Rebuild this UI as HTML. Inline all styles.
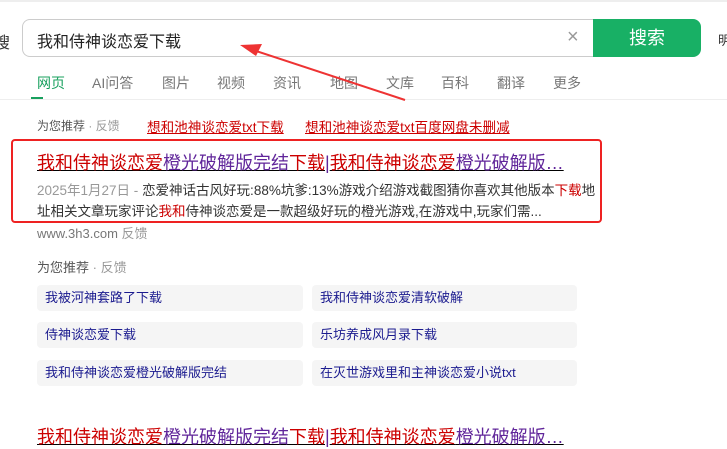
<!DOCTYPE html><html><head><meta charset="utf-8"><style>
body{margin:0;width:727px;height:447px;overflow:hidden;background:#fff;font-family:"Liberation Sans","Noto Sans CJK SC",sans-serif;position:relative}
.a{position:absolute;white-space:nowrap}
.r{color:#c00}.p{color:#60259a}
.t{font-size:18px;text-decoration:underline}
.g{position:absolute;background:#f5f5f5;border-radius:4px;height:26px;line-height:26px;font-size:13px;color:#1b1b8f;padding-left:8px;box-sizing:border-box}
.tb{position:absolute;top:73px;font-size:14px;color:#777}
</style></head><body>
<div class="a" style="top:0;left:0;width:727px;height:2px;background:#eee"></div>
<div class="a" style="left:-6px;top:29px;font-size:16px;color:#333">搜</div>
<div class="a" style="left:22px;top:19px;width:576px;height:36px;border:1px solid #ccc;border-right:none;border-radius:8px 0 0 8px"></div>
<div class="a" style="left:37px;top:28px;font-size:16px;color:#222">我和侍神谈恋爱下载</div>
<div class="a" style="left:567px;top:26px;font-size:20px;color:#999">×</div>
<div class="a" style="left:593px;top:19px;width:108px;height:38px;background:#18b065;border-radius:0 8px 8px 0;color:#fff;font-size:18px;line-height:38px;text-align:center">搜索</div>
<div class="a" style="left:718px;top:30px;font-size:13px;color:#333">明</div>
<div class="tb" style="left:37px;color:#18a05e">网页</div>
<div class="tb" style="left:92px">AI问答</div>
<div class="tb" style="left:162px">图片</div>
<div class="tb" style="left:217px">视频</div>
<div class="tb" style="left:273px">资讯</div>
<div class="tb" style="left:330px">地图</div>
<div class="tb" style="left:386px">文库</div>
<div class="tb" style="left:441px">百科</div>
<div class="tb" style="left:497px">翻译</div>
<div class="tb" style="left:553px">更多</div>
<div class="a" style="left:31px;top:97px;width:12px;height:3px;background:#18a05e"></div>
<div class="a" style="left:0;top:99px;width:727px;height:1px;background:#eee"></div>
<svg class="a" style="left:0;top:0" width="727" height="447"><line x1="250" y1="49" x2="405" y2="100" stroke="#e33" stroke-width="2"/><polygon points="240,45 262,44 256,56" fill="#e33"/></svg>
<div class="a" style="left:37px;top:117px;font-size:12px;color:#555">为您推荐 <span style="color:#999">· 反馈</span></div>
<div class="a r" style="left:147px;top:116px;font-size:13.6px;text-decoration:underline">想和池神谈恋爱txt下载</div>
<div class="a r" style="left:305px;top:116px;font-size:13.6px;text-decoration:underline">想和池神谈恋爱txt百度网盘未删减</div>
<div class="a" style="left:11px;top:139px;width:587px;height:80px;border:2px solid #e22;border-radius:4px"></div>
<div class="a t" style="left:37px;top:149px"><span class="r">我和侍神谈恋爱</span><span class="p">橙光破解版完结</span><span class="r">下载</span><span class="p">|</span><span class="r">我和侍神谈恋爱</span><span class="p">橙光破解版…</span></div>
<div class="a" style="left:37px;top:179px;font-size:13.5px;color:#333"><span style="color:#999">2025年1月27日 - </span>恋爱神话古风好玩:88%坑爹:13%游戏介绍游戏截图猜你喜欢其他版本<span class="r">下载</span>地</div>
<div class="a" style="left:37px;top:200px;font-size:13.5px;color:#333">址相关文章玩家评论<span class="r">我和</span>侍神谈恋爱是一款超级好玩的橙光游戏,在游戏中,玩家们需...</div>
<div class="a" style="left:37px;top:223px;font-size:13px;color:#777">www.3h3.com <span style="color:#999">反馈</span></div>
<div class="a" style="left:37px;top:257px;font-size:13px;color:#555">为您推荐 <span style="color:#999">· 反馈</span></div>
<div class="g" style="left:37px;top:285px;width:266px">我被河神套路了下载</div>
<div class="g" style="left:312px;top:285px;width:265px">我和侍神谈恋爱清软破解</div>
<div class="g" style="left:37px;top:322px;width:266px">侍神谈恋爱下载</div>
<div class="g" style="left:312px;top:322px;width:265px">乐坊养成风月录下载</div>
<div class="g" style="left:37px;top:360px;width:266px">我和侍神谈恋爱橙光破解版完结</div>
<div class="g" style="left:312px;top:360px;width:265px">在灭世游戏里和主神谈恋爱小说txt</div>
<div class="a t" style="left:37px;top:423px"><span class="r">我和侍神谈恋爱</span><span class="p">橙光破解版完结</span><span class="r">下载</span><span class="p">|</span><span class="r">我和侍神谈恋爱</span><span class="p">橙光破解版…</span></div>
</body></html>
